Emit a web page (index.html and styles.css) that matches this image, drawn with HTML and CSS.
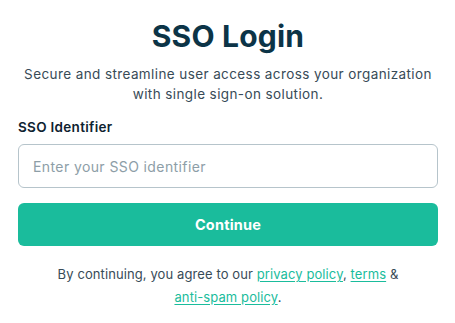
FILE: index.html
```html
<!DOCTYPE html>
<html lang="en">
<head>
<meta charset="utf-8">
<title>SSO Login</title>
<link rel="stylesheet" href="styles.css">
</head>
<body>
<main class="card">
  <h1 class="title">SSO Login</h1>
  <p class="subtitle">Secure and streamline user access across your organization<br>with single sign-on solution.</p>
  <form class="form">
    <label class="label" for="sso">SSO Identifier</label>
    <input class="input" id="sso" type="text" placeholder="Enter your SSO identifier">
    <button class="button" type="button">Continue</button>
  </form>
  <p class="terms">By continuing, you agree to our <a href="#">privacy policy</a>, <a href="#">terms</a> &amp;<br><a href="#">anti-spam policy</a>.</p>
</main>
</body>
</html>
```
FILE: styles.css
```css
* { box-sizing: border-box; }
html, body { margin: 0; background: #ffffff; }
body { font-family: "Inter", "Noto Sans", sans-serif; color: #384b57; }
.card {
  width: 455px;
  height: 323px;
  padding: 17px 17px 0 18px;
  display: flex;
  flex-direction: column;
  align-items: stretch;
}
.title {
  margin: 0;
  text-align: center;
  font-size: 30px;
  font-weight: 700;
  line-height: 38px;
  color: #0c3447;
  letter-spacing: 0.2px;
}
.subtitle {
  margin: 9px 0 0;
  text-align: center;
  font-size: 13.5px;
  letter-spacing: 0.4px;
  line-height: 20px;
  color: #384b57;
}
.form { display: flex; flex-direction: column; margin-top: 14px; }
.label {
  font-size: 13.5px;
  font-weight: 600;
  letter-spacing: 0.3px;
  color: #0e2230;
  line-height: 18px;
}
.input {
  margin-top: 8px;
  height: 44px;
  border: 1px solid #b6c4cb;
  border-radius: 6px;
  padding: 0 14px;
  font-family: inherit;
  font-size: 14px;
  letter-spacing: 0.4px;
  color: #384b57;
  outline: none;
}
.input::placeholder { color: #8d9ea7; }
.button {
  margin-top: 15px;
  height: 43px;
  border: none;
  border-radius: 6px;
  background: #1abc9c;
  color: #ffffff;
  font-family: inherit;
  font-size: 14.5px;
  font-weight: 700;
  letter-spacing: 0.2px;
}
.terms {
  margin: 17px 0 0;
  text-align: center;
  font-size: 13px;
  letter-spacing: 0.1px;
  line-height: 23px;
  color: #384b57;
}
.terms a { color: #1abc9c; text-decoration: underline; text-underline-offset: 2px; }
```
